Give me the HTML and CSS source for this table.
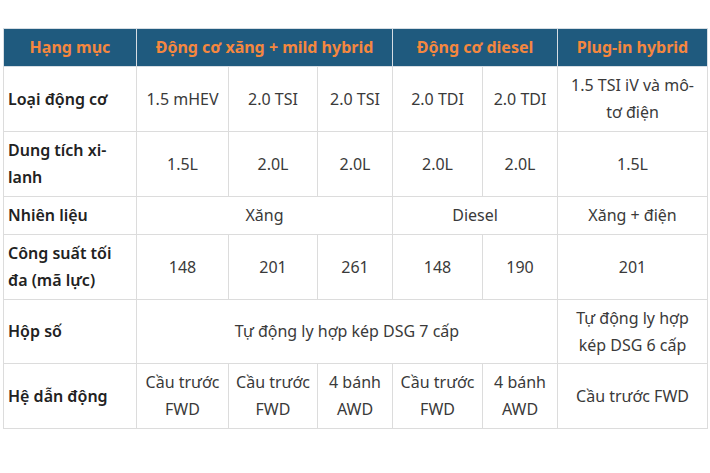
FILE: index.html
```html
<!DOCTYPE html>
<html lang="vi">
<head>
<meta charset="utf-8">
<link rel="stylesheet" href="styles.css">
</head>
<body>
<table class="spec">
  <colgroup>
    <col class="c-label">
    <col class="c-a">
    <col class="c-b">
    <col class="c-c">
    <col class="c-d">
    <col class="c-e">
    <col class="c-f">
  </colgroup>
  <thead>
    <tr>
      <th>Hạng mục</th>
      <th colspan="3">Động cơ xăng + mild hybrid</th>
      <th colspan="2">Động cơ diesel</th>
      <th>Plug-in hybrid</th>
    </tr>
  </thead>
  <tbody>
    <tr>
      <td class="label">Loại động cơ</td>
      <td>1.5 mHEV</td>
      <td>2.0 TSI</td>
      <td>2.0 TSI</td>
      <td>2.0 TDI</td>
      <td>2.0 TDI</td>
      <td class="wide">1.5 TSI iV và mô-tơ điện</td>
    </tr>
    <tr>
      <td class="label">Dung tích xi-lanh</td>
      <td>1.5L</td>
      <td>2.0L</td>
      <td>2.0L</td>
      <td>2.0L</td>
      <td>2.0L</td>
      <td class="wide">1.5L</td>
    </tr>
    <tr>
      <td class="label">Nhiên liệu</td>
      <td colspan="3">Xăng</td>
      <td colspan="2">Diesel</td>
      <td class="wide">Xăng + điện</td>
    </tr>
    <tr>
      <td class="label">Công suất tối đa (mã lực)</td>
      <td>148</td>
      <td>201</td>
      <td>261</td>
      <td>148</td>
      <td>190</td>
      <td class="wide">201</td>
    </tr>
    <tr>
      <td class="label">Hộp số</td>
      <td colspan="5">Tự động ly hợp kép DSG 7 cấp</td>
      <td class="wide">Tự động ly hợp kép DSG 6 cấp</td>
    </tr>
    <tr>
      <td class="label">Hệ dẫn động</td>
      <td>Cầu trước FWD</td>
      <td>Cầu trước FWD</td>
      <td>4 bánh AWD</td>
      <td>Cầu trước FWD</td>
      <td>4 bánh AWD</td>
      <td class="wide">Cầu trước FWD</td>
    </tr>
  </tbody>
</table>
</body>
</html>
```
FILE: styles.css
```css
html, body {
  margin: 0;
  padding: 0;
  background: #ffffff;
}

body {
  padding: 28px 0 0 3px;
  font-family: "Noto Sans", "Open Sans", sans-serif;
  font-size: 16px;
  color: #3a3a3a;
}

.spec {
  border-collapse: collapse;
  table-layout: fixed;
  width: 704px;
}

.c-label { width: 133px; }
.c-a { width: 92px; }
.c-b { width: 89px; }
.c-c { width: 75px; }
.c-d { width: 90px; }
.c-e { width: 75px; }
.c-f { width: 150px; }

.spec th,
.spec td {
  border: 1px solid #dcdcdc;
  padding: 5px 5px;
  line-height: 27px;
  text-align: center;
  vertical-align: middle;
}

.spec td.wide {
  padding-left: 8px;
  padding-right: 8px;
}

.spec th {
  background: #1f5a7e;
  color: #f5873f;
  font-weight: 700;
  border-color: #d6dde3;
}

.spec td.label {
  text-align: left;
  font-weight: 600;
  color: #222222;
  padding-left: 4px;
}

.spec tbody tr:nth-child(5) td {
  line-height: 26.5px;
}
```
